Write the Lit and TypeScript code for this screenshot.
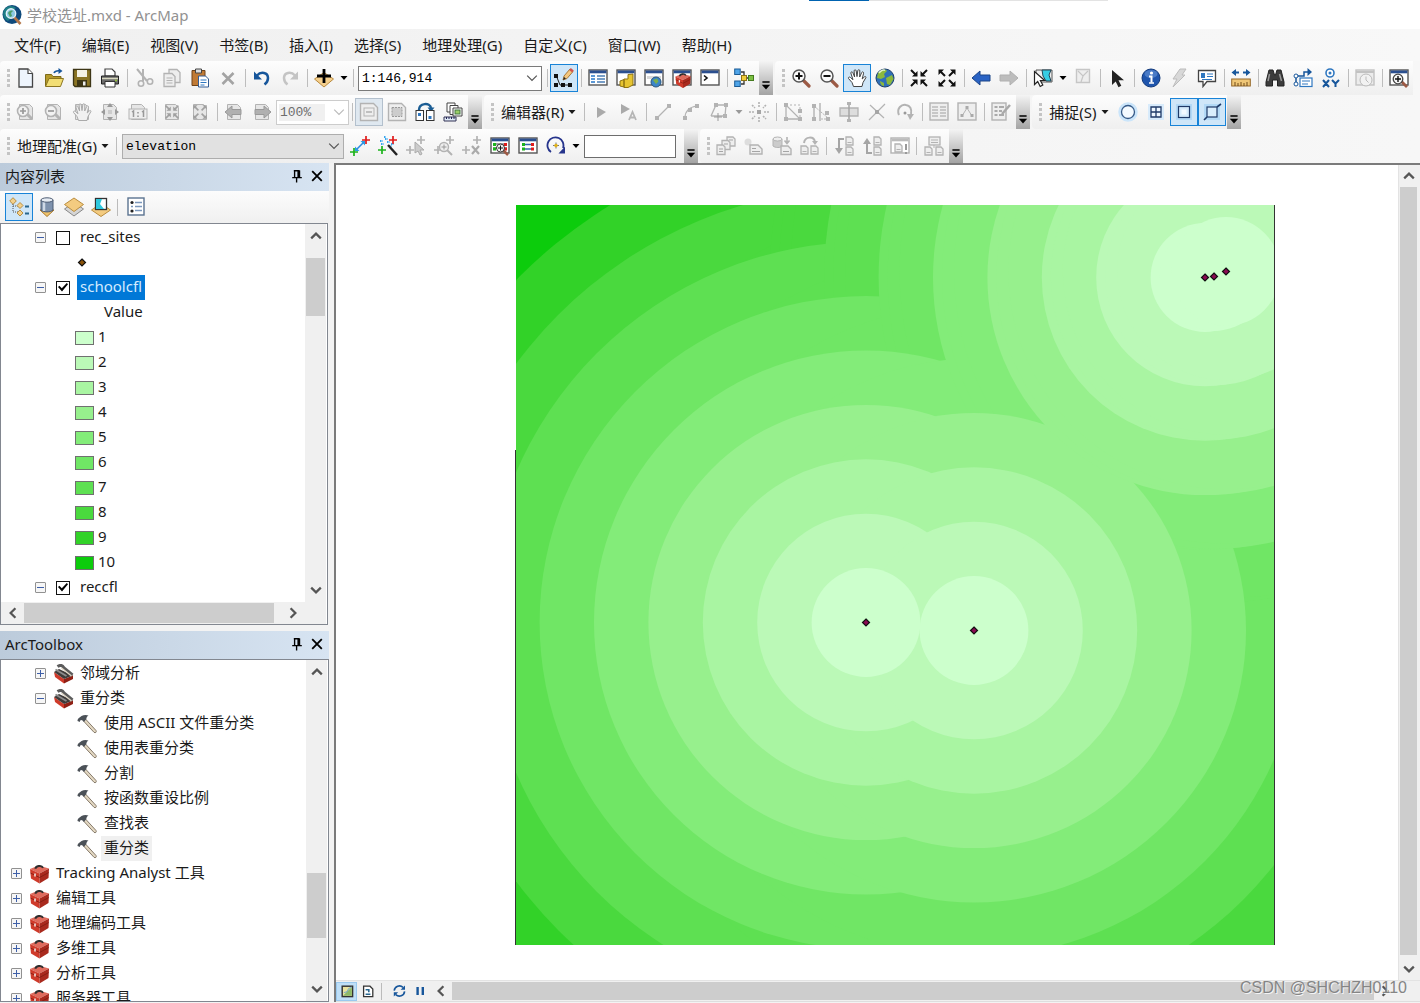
import { LitElement, html, svg, css, nothing, TemplateResult } from "lit";
import { customElement, property, state } from "lit/decorators.js";
import { classMap } from "lit/directives/class-map.js";
import { styleMap } from "lit/directives/style-map.js";

const G = "#b3b3b3";
const NAVY = "#1f3a68";
const BLUE = "#17569b";

const grayPage = svg`<path d="M3.500 2.500h10l3 3v12h-13z" fill="#e6e6e6" stroke="${G}"/>`;
const windowFrame = (body: unknown, bar = "#2b4f8f", line = "#555") => svg`
  <rect x="1" y="2" width="18" height="15" fill="#fff" stroke="${line}" stroke-width="1.400"/>
  <rect x="1.600" y="2.500" width="16.800" height="2.800" fill="${bar}"/>${body}`;
const plus = (x: number, y: number, c: string) =>
  svg`<path d="M${x - 4} ${y}h8M${x} ${y - 4}v8" stroke="${c}" stroke-width="1.700"/>`;
const smallPage = (x: number, y: number, c = G) => svg`
  <path d="M${x} ${y}h5l2 2v6h-7z" fill="#eee" stroke="${c}" stroke-width="1.300"/>
  <path d="M${x + 1.5} ${y + 5.500}h4" stroke="${c}"/>`;
const magnifier = (sign: string) => svg`
  <path d="M12.500 12.500l5.500 5.500" stroke="#9c5a45" stroke-width="3.200" stroke-linecap="round"/>
  <circle cx="8" cy="8" r="6" fill="#fafafa" stroke="#555" stroke-width="1.500"/>
  <path d="${sign}" stroke="#111" stroke-width="2"/>`;
const hand = (fill: string, line: string) => svg`
  <path d="M6.500 18.500l-1.500-4-3.500-4c-.6-1.300 1-2 2-1l2.500 2.200L3.800 5c0-1.400 1.700-1.600 2.100-.3L7.600 9 7.100 2.900c.1-1.500 1.800-1.500 2.100 0L10 8.600l.8-6c.3-1.300 2-1.200 2 .2L12.700 9l2-4.500c.7-1.200 2.100-.6 1.900.7L15.200 11l2.300-2.200c1-.7 1.800.1 1.300 1L16 14.500l-1 4z" fill="${fill}" stroke="${line}" stroke-width="1" stroke-linejoin="round"/>`;
const squeezeArrows = (c: string) => svg`
  <path d="M2 2l5 5M18 2l-5 5M2 18l5-5M18 18l-5-5" stroke="${c}" stroke-width="2"/>
  <path d="M8.500 3v5.500H3zM11.500 3v5.500H17zM8.500 17v-5.500H3zM11.500 17v-5.500H17z" fill="${c}"/>`;
const spreadArrows = (c: string) => svg`
  <path d="M3 3l5 5M17 3l-5 5M3 17l5-5M17 17l-5-5" stroke="${c}" stroke-width="2"/>
  <path d="M1.500 1.500H7L1.500 7zM18.500 1.500H13L18.500 7zM1.500 18.500H7L1.500 13zM18.500 18.500H13l5.500-5.500z" fill="${c}"/>`;
const toolbox = svg`
  <path d="M.5 5L9 1.500l10.500 3L10 9.500z" fill="#df6a5c"/>
  <path d="M.5 5L10 9.500V19.500L1.500 14.500z" fill="#cf3a2a"/>
  <path d="M19.500 4.500L10 9.500v10l9-5.500z" fill="#a92a1e"/>
  <path d="M1 9l9 4.500 9.300-5" stroke="#7c1a10" fill="none" stroke-width=".8"/>
  <path d="M6 4.800C6 2 12 .5 13.500 3.800" stroke="#2e2e2e" stroke-width="2" fill="none"/>
  <path d="M5.500 9.500v3" stroke="#f4e6e2" stroke-width="1.600"/>`;
const diamond = (x: number, y: number, r: number, fill: string, line: string) =>
  svg`<path d="M${x} ${y - r}l${r} ${r}-${r} ${r}-${r}-${r}z" fill="${fill}" stroke="${line}"/>`;

const ICONS: Record<string, unknown> = {
  newDoc: svg`<path d="M3 1h9l4.500 4.500V19H3z" fill="#eef5fd" stroke="#444" stroke-width="1.300"/><path d="M12 1v4.500h4.500" fill="#fff" stroke="#444" stroke-width="1.200"/>`,
  open: svg`<path d="M1.500 18V6.500h6l1.500 2h8V11" fill="#b59a2b" stroke="#7d6a18"/><path d="M1.500 18.500L5 10.500h14.500L16.500 18.500z" fill="#f2de74" stroke="#8b7520"/><path d="M10 5c1-2.500 3-2.500 6-2.200" stroke="${BLUE}" stroke-width="1.600" fill="none"/><path d="M14.500 0l4 3-4 3z" fill="${BLUE}"/>`,
  save: svg`<path d="M1.500 1.500h17v17H3l-1.500-1.500z" fill="#8a7424" stroke="#3d3616" stroke-width="1.300"/><rect x="5" y="2" width="10" height="7" fill="#f5f2e4"/><rect x="5" y="12" width="10" height="6.500" fill="#3d3616"/><rect x="11" y="13.500" width="2.500" height="4" fill="#eee"/>`,
  print: svg`<path d="M5 8V1h7l3 3v4z" fill="#fff" stroke="#444" stroke-width="1.200"/><path d="M1.500 8h17v8h-17z" fill="#6b6b6b" stroke="#222"/><path d="M2 10.500h16" stroke="#d8d8c0" stroke-width="1.500"/><path d="M5 13.500h10v5.500H5z" fill="#fff" stroke="#333"/><circle cx="16" cy="12.500" r="1" fill="#9c3"/>`,
  cut: svg`<path d="M3 1l10 12M9 1l0 12" stroke="${G}" stroke-width="2"/><circle cx="7" cy="15.500" r="2.700" fill="none" stroke="${G}" stroke-width="1.600"/><circle cx="16" cy="13.500" r="2.700" fill="none" stroke="${G}" stroke-width="1.600"/>`,
  copy: svg`<path d="M7 1.500h8l3 3v10H7z" fill="#eee" stroke="${G}" stroke-width="1.300"/><path d="M2 5.500h8l3 3v10H2z" fill="#eee" stroke="${G}" stroke-width="1.300"/><path d="M4.500 10h6M4.500 12.500h6M4.500 15h6" stroke="${G}"/>`,
  paste: svg`<path d="M2 2.500h13v15H2z" fill="#c07a35" stroke="#6e431a"/><path d="M5.500 1h6v4h-6z" fill="#ddd" stroke="#444"/><path d="M8.500 8h7l3 3v8h-10z" fill="#fff" stroke="#345d94"/><path d="M10.500 12h6M10.500 14.500h6M10.500 17h4" stroke="#2f77c0"/>`,
  del: svg`<path d="M4.500 5l11 11M15.500 5l-11 11" stroke="#a3a3a3" stroke-width="2.600"/>`,
  undo: svg`<path d="M5 7.500C9 3 16 4.500 16 10c0 3-1.500 5-3.500 6.500" fill="none" stroke="${BLUE}" stroke-width="2.500"/><path d="M2 3.500v8h8z" fill="${BLUE}"/>`,
  redo: svg`<path d="M15 7.500C11 3 4 4.500 4 10c0 3 1.500 5 3.500 6.500" fill="none" stroke="#c4c4c4" stroke-width="2.500"/><path d="M18 3.500v8h-8z" fill="#c4c4c4"/>`,
  addData: svg`<path d="M10 4.500l9.500 6.500-9.500 8-9.500-8z" fill="#f5cf8c" stroke="#b88a3f"/><path d="M10 1v14M3 8h14" stroke="#000" stroke-width="2.800"/>`,
  editorToggle: svg`<path d="M2 7l4 10h11" stroke="#222" fill="none"/><path d="M0 6h4v4H0zM0 15h4v4H0zM7 15h4v4H7zM14 15h4v4h-4z" fill="#111"/><path d="M9 12l1-4 6-7 3 2.500-6 7z" fill="#f4c77e" stroke="#a8793a"/><path d="M16 1l3 2.500" stroke="#d3544c" stroke-width="2.500"/><path d="M9 12l1-3 2 1.500z" fill="#222"/>`,
  tableWin: windowFrame(svg`<path d="M3 8h4M3 11h4M3 14h4" stroke="#2677c9" stroke-width="1.500"/><path d="M9 8h8M9 11h8M9 14h8" stroke="#4a7eb5" stroke-width="1.500"/>`),
  catalogWin: windowFrame(svg`<path d="M4 13l4-1.500V19l-4-1zM8 11h4V6.500l5-.5v11l-5 2.500H8z" fill="#e7c531" stroke="#8d7313"/>`),
  searchWin: windowFrame(svg`<path d="M3 8h14v3H3z" fill="#d8d8d8"/><circle cx="12" cy="14" r="5" fill="#3b86c8" stroke="#27547d"/><path d="M9 12l4-1.500 1.500 3L12 16z" fill="#7db04c"/>`),
  toolboxWin: windowFrame(svg`<g transform="translate(3 4.500) scale(.8)">${toolbox}</g>`),
  pythonWin: windowFrame(svg`<path d="M4 7.500l3 2.500-3 2.500" stroke="#111" stroke-width="1.600" fill="none"/>`),
  model: svg`<path d="M7 4h3v12H7M10 10h6" stroke="#333" fill="none" stroke-width="1.300"/><rect x=".7" y="1" width="5.500" height="5.500" fill="#4fa4e8" stroke="#1a5b95"/><rect x=".7" y="13" width="5.500" height="5.500" fill="#4fa4e8" stroke="#1a5b95"/><rect x="7.500" y="7.500" width="5" height="5" fill="#f2cc3a" stroke="#8d7313"/><rect x="14.500" y="7.500" width="5" height="5" fill="#7bc043" stroke="#447a1e"/>`,
  zoomIn: magnifier("M4.500 8h7M8 4.500v7"),
  zoomOut: magnifier("M4.500 8h7"),
  hand: hand("#fff", "#444"),
  globe: svg`<circle cx="10" cy="10" r="9" fill="#2f6fb8" stroke="#1d3f6b"/><path d="M3 5c3-4 8-4 9-2l-3 3 1 3-4 2-4-1zM11 10l6-3 1.500 4-3.500 6-3-1zM5 13l4 2 0 3c-2 0-4-2-4-5z" fill="#8cb83c"/><path d="M4 5c2-3 5-3.500 6-2.500" stroke="#e5f1c9" stroke-width="1.500" fill="none"/>`,
  fixIn: squeezeArrows("#111"),
  fixOut: spreadArrows("#111"),
  back: svg`<path d="M1 10l8-7v4h10v6H9v4z" fill="#2a63c4" stroke="#1b4487"/>`,
  forward: svg`<path d="M19 10l-8-7v4H1v6h10v4z" fill="#bdbdbd" stroke="#b0b0b0"/>`,
  selectFeat: svg`<path d="M3 2h16v12H3z" fill="#eee" stroke="#555"/><path d="M9 2h9l-2 5 2 6h-5l-3-5z" fill="#35cde3" stroke="#245"/><path d="M1.500 3.500v13l3.200-3 2.500 5 2.600-1.500-2.400-4.500h4.300z" fill="#fff" stroke="#222" stroke-width="1.200"/>`,
  clearSel: svg`<path d="M3.500 1.500h13v13h-13z" fill="#eee" stroke="#c6c6c6" stroke-width="1.400"/><path d="M5 3l5 5 5-5M10 8l-2 6" fill="none" stroke="#c6c6c6" stroke-width="1.200"/>`,
  pointer: svg`<path d="M5 2v15l3.700-3.500 2.800 5.700 2.800-1.500-2.800-5.500H17z" fill="#222"/>`,
  info: svg`<circle cx="10" cy="10" r="9" fill="#1f55ad" stroke="#123a7c"/><ellipse cx="10" cy="6" rx="6.500" ry="4" fill="#4a7bc6"/><circle cx="10.500" cy="5" r="1.600" fill="#fff"/><path d="M8 8.500h2.500v6" stroke="#fff" stroke-width="2" fill="none"/><path d="M8 15h5" stroke="#fff" stroke-width="1.500"/>`,
  bolt: svg`<path d="M11 1h6l-4 6h3L4 19l4-8H4z" fill="#d8d8d8" stroke="#bcbcbc"/>`,
  callout: svg`<path d="M1.500 2.500h17v11H10l-4 5v-5H1.500z" fill="#fff" stroke="#444" stroke-width="1.300"/><rect x="4" y="5" width="4" height="5" fill="#2f77c0"/><path d="M10 6h6M10 8.500h6M5 11.500h10" stroke="#2f77c0" stroke-width="1.200"/>`,
  measure: svg`<path d="M3 4.500h5M12 4.500h5" stroke="${BLUE}" stroke-width="2"/><path d="M5 1v7L.5 4.500zM15 1v7l4.500-3.500z" fill="${BLUE}"/><rect x=".7" y="11" width="18.600" height="7" fill="#efc676" stroke="#94682a"/><path d="M4 14v4M7 15v3M10 14v4M13 15v3M16 14v4" stroke="#6e4b1b"/>`,
  binoculars: svg`<path d="M4 2h4l1.500 5h1L12 2h4l3 12v4h-6.500v-6h-5v6H1v-4z" fill="#3c3c3c" stroke="#222"/><path d="M4.500 6L3 13M14.500 6l2 7" stroke="#999" stroke-width="1.500"/>`,
  route: svg`<path d="M3 14V8h8V4h5" fill="none" stroke="${BLUE}" stroke-width="1.500"/><path d="M14.500 0l4.500 4-4.500 4z" fill="${BLUE}"/><circle cx="3" cy="16" r="2" fill="#fff" stroke="${BLUE}"/><circle cx="3" cy="8" r="2" fill="#fff" stroke="${BLUE}"/><rect x="7" y="10" width="12" height="8.500" fill="#fff" stroke="#2f77c0" stroke-width="1.200"/><path d="M9 13h8M9 16h6" stroke="#2f77c0"/>`,
  goXY: svg`<circle cx="9" cy="5" r="4" fill="#fff" stroke="#2f77c0" stroke-width="1.600"/><circle cx="9" cy="5" r="1.500" fill="#2f77c0"/><path d="M2 12l6 7M8 12l-6 7M11 12l3.500 3.500L18 12M14.500 15v4" stroke="${BLUE}" stroke-width="2" fill="none"/>`,
  timeWin: svg`<rect x="1" y="2" width="18" height="15" fill="#ececec" stroke="#c2c2c2" stroke-width="1.400"/><path d="M1 4h18" stroke="#c2c2c2" stroke-width="2"/><circle cx="11" cy="12" r="6" fill="#f2f2f2" stroke="#bbb"/><path d="M11 8.500V12l2.500 2.500" stroke="#bbb" fill="none"/>`,
  viewerWin: windowFrame(svg`<path d="M12 13l6 6" stroke="#9c5a45" stroke-width="2.800"/><circle cx="9" cy="11" r="4.800" fill="#f5f5f5" stroke="#444" stroke-width="1.300"/><path d="M6 11h6M9 8v6" stroke="#111" stroke-width="1.400"/>`),
  pgZoomIn: svg`${grayPage}<path d="M11 12l5 5" stroke="${G}" stroke-width="3"/><circle cx="7" cy="9" r="5.500" fill="#f2f2f2" stroke="${G}" stroke-width="1.600"/><path d="M4 9h6M7 6v6" stroke="#999" stroke-width="1.700"/>`,
  pgZoomOut: svg`${grayPage}<path d="M11 12l5 5" stroke="${G}" stroke-width="3"/><circle cx="7" cy="9" r="5.500" fill="#f2f2f2" stroke="${G}" stroke-width="1.600"/><path d="M4 9h6" stroke="#999" stroke-width="1.700"/>`,
  pgHand: svg`${grayPage}${hand("#f0f0f0", "#aaa")}`,
  pgFull: svg`${grayPage}<path d="M10 1l3 4H7zM10 19l3-4H7zM1 10l4-3v6zM19 10l-4-3v6z" fill="#999"/><rect x="8" y="8" width="4" height="4" fill="#ccc"/>`,
  pgOne: svg`${grayPage}<rect x="1" y="7" width="18" height="10" fill="#eee" stroke="${G}"/><path d="M4 10l1.500-1v6M14 10l1.500-1v6" stroke="#999" stroke-width="1.500" fill="none"/><path d="M10 10v1.500M10 13.500V15" stroke="#999" stroke-width="1.600"/>`,
  pgFixIn: svg`${grayPage}<g transform="translate(2 2) scale(.8)">${squeezeArrows("#a0a0a0")}</g>`,
  pgFixOut: svg`${grayPage}<g transform="translate(2 2) scale(.8)">${spreadArrows("#a0a0a0")}</g>`,
  pgBack: svg`${grayPage}<path d="M1 10l7-6v3.500h9v5H8V16z" fill="#b0b0b0" stroke="#999"/>`,
  pgNext: svg`${grayPage}<path d="M19 10l-7-6v3.500H3v5h9V16z" fill="#b0b0b0" stroke="#999"/>`,
  draft: svg`<path d="M1.500 1.500h13l4 4v13h-17z" fill="#eee" stroke="${G}" stroke-width="1.400"/><rect x="5" y="6" width="10" height="8" fill="none" stroke="${G}"/><path d="M7 10h6" stroke="${G}" stroke-width="1.600"/>`,
  focus: svg`<path d="M1.500 1.500h13l4 4v13h-17z" fill="#eee" stroke="${G}" stroke-width="1.400"/><rect x="5" y="5.500" width="10" height="9" fill="#ccc" stroke="#999" stroke-dasharray="2 1"/>`,
  changeLayout: svg`<path d="M4 8C4 1 15 0 16 6" stroke="#1b5d94" stroke-width="2.500" fill="none"/><path d="M12.500 5.500h7L16 10z" fill="#1b5d94"/><rect x="1" y="8.500" width="7.500" height="10" fill="#fff" stroke="#333"/><rect x="11.500" y="8.500" width="7.500" height="10" fill="#fff" stroke="#333"/><path d="M3 11h3v3H3zM13.500 14h3v3h-3z" fill="#2f77c0"/>`,
  ddp: svg`<path d="M4 1h8v9H4z" fill="#fff" stroke="#444"/><path d="M7 3.500h8v9H7z" fill="#fff" stroke="#444"/><path d="M10 6h9v8h-9z" fill="#fff" stroke="#444"/><rect x="12" y="8" width="5" height="4" fill="#9c6" stroke="#474"/><path d="M1 15h12v4H1z" fill="#dfeaf6" stroke="#335"/><path d="M3.500 15v2M6 15v2M8.500 15v2M11 15v2" stroke="#225"/>`,
  edArrow: svg`<path d="M6 5l9 5-9 6z" fill="#aaa"/>`,
  edArrowA: svg`<path d="M2 2l9 5-9 5z" fill="#aaa"/><path d="M10 18l3.500-8 3.500 8M11 15.500h5" stroke="#b5b5b5" stroke-width="1.800" fill="none"/>`,
  segLine: svg`<path d="M4 16L16 4" stroke="${G}" stroke-width="1.200"/><path d="M2 14h4v4H2zM14 2h4v4h-4z" fill="${G}"/>`,
  segArc: svg`<path d="M4 16C4 9 9 5 16 4" stroke="${G}" stroke-width="1.200" fill="none"/><path d="M2 14h4v4H2zM7 6h4v4H7zM14 2h4v4h-4z" fill="${G}"/>`,
  trace: svg`<path d="M2 14L7 3h10l-1 11H2" fill="none" stroke="${G}" stroke-width="1.300"/><path d="M5 1h4v4H5zM15 1h4v4h-4zM14 12h4v4h-4z" fill="${G}"/><path d="M9 11v8M5 15h8" stroke="#999"/>`,
  pointEd: svg`<path d="M8 8h4v4H8z" fill="#a5a5a5"/><path d="M10 0v5M10 15v5M0 10h5M15 10h5M3 3l3 3M14 14l3 3M17 3l-3 3M3 17l3-3" stroke="${G}" stroke-width="1.600" stroke-dasharray="2 1"/>`,
  editVert: svg`<path d="M3 17V3l14 14z" fill="none" stroke="${G}" stroke-width="1.300"/><path d="M3 3h14v14" stroke="${G}" fill="none" stroke-dasharray="2 2"/><path d="M1 1h4v4H1zM1 15h4v4H1zM15 15h4v4h-4zM15 7h4v4h-4z" fill="${G}"/>`,
  reshape: svg`<path d="M3 3v14M9 1v18" stroke="${G}" stroke-width="1.400"/><path d="M3 4l14 12M10 17h8" stroke="${G}" stroke-dasharray="2 1"/><path d="M1 2h4v4H1zM1 15h4v4H1zM14 9h4v4h-4zM15 15h4v4h-4z" fill="${G}"/>`,
  cutPoly: svg`<path d="M1 6h18v8H1z" fill="#ddd" stroke="${G}" stroke-width="1.300"/><path d="M10 1v18" stroke="#a5a5a5" stroke-width="1.500"/><path d="M8 0h4v3H8zM8 17h4v3H8z" fill="${G}"/>`,
  splitTool: svg`<path d="M2 18L18 2M3 3l14 13" stroke="${G}" stroke-width="1.200"/><path d="M8 8h4v4H8z" fill="#a5a5a5"/>`,
  rotate: svg`<path d="M4 13C1 6 7 2 11 3c4 .5 6 4 5 9" fill="none" stroke="${G}" stroke-width="2"/><path d="M12 12h7l-4 6z" fill="${G}"/><circle cx="10" cy="11" r="1.500" fill="#999"/>`,
  attrib: svg`<rect x="1" y="1" width="18" height="17" fill="#eee" stroke="${G}" stroke-width="1.400"/><path d="M3 5h6M3 8h6M3 11h6M3 14h6M11 5h6M11 8h6M11 11h6M11 14h6" stroke="#bbb" stroke-width="1.300"/>`,
  sketchProps: svg`<rect x="1" y="1" width="18" height="17" fill="#eee" stroke="${G}" stroke-width="1.400"/><path d="M5 14l5-8 5 8" fill="none" stroke="${G}"/><path d="M3.500 12h3v3h-3zM8.500 4h3v3h-3zM13.500 12h3v3h-3z" fill="#aaa"/>`,
  createFeat: svg`<rect x="1" y="1" width="14" height="17" fill="#eee" stroke="${G}" stroke-width="1.400"/><path d="M3.500 5h3M3.500 9h3M3.500 13h3M8 5h5M8 9h3M8 13h5" stroke="#aaa" stroke-width="1.800"/><path d="M11 12l8-9" stroke="#a9a9a9" stroke-width="2.500"/>`,
  snapPoint: svg`<circle cx="10" cy="10" r="8" fill="none" stroke="#cbe5fa" stroke-width="3.500"/><circle cx="10" cy="10" r="6.500" fill="#f4faff" stroke="#365a88" stroke-width="1.300"/>`,
  snapEnd: svg`<rect x="2" y="2" width="16" height="16" fill="#d8ebfb"/><path d="M5 5h10v10H5zM10 5v10M5 10h10" stroke="${NAVY}" stroke-width="1.300" fill="#eef7ff"/>`,
  snapVertex: svg`<rect x="2" y="2" width="16" height="16" fill="#b3d9f6"/><rect x="4.500" y="4.500" width="11" height="11" fill="#d6ebfb" stroke="${NAVY}" stroke-width="1.200"/><rect x="7.500" y="7.500" width="5" height="5" fill="#f2f9ff"/>`,
  snapEdge: svg`<rect x="2" y="2" width="16" height="16" fill="#b3d9f6"/><path d="M2 18l3-3M15 5l4-3" stroke="${NAVY}" stroke-width="1.600"/><rect x="5" y="5" width="10" height="10" fill="#d9edfc" stroke="${NAVY}" stroke-width="1.200"/>`,
  ctrlPts: svg`<path d="M6 14l8-8" stroke="#2c8be0" stroke-width="1.600"/><path d="M5 10.500v4.500h4.500zM15 9.500V5h-4.500z" fill="#2c9be5"/>${plus(4, 16, "#1db31d")}${plus(16, 4, "#e01b1b")}`,
  autoReg: svg`<path d="M2 5h3M7 3h3M3 8h3M9 6h3M13 8h3M6 1h2M11 10h3" stroke="#35a5ef" stroke-width="2" stroke-dasharray="1.500 1"/>${plus(15, 4, "#e01b1b")}${plus(4, 14, "#1db31d")}<path d="M10 9l9 10" stroke="#222" stroke-width="2.400"/>`,
  geoSelect: svg`${plus(15, 4, G)}${plus(4, 14, G)}<path d="M9 6v11l3-2 2 4 2-1-2-4h4z" fill="#ccc" stroke="#aaa"/>`,
  geoZoom: svg`${plus(16, 4, G)}${plus(4, 14, G)}<path d="M13 14l5 5" stroke="${G}" stroke-width="2"/><circle cx="10" cy="11" r="4.500" fill="#eee" stroke="${G}" stroke-width="1.400"/><path d="M7.500 11h5M10 8.500v5" stroke="#999"/>`,
  geoDel: svg`${plus(15, 4, G)}${plus(4, 14, G)}<path d="M10 10l7 8M17 10l-7 8" stroke="#aaa" stroke-width="2.200"/>`,
  viewLink: windowFrame(svg`<path d="M3 8h14M3 12h14" stroke="#444"/><path d="M3 7h3v3H3zM3 11.500h3v3H3z" fill="#1db31d"/><path d="M14 7h3v3h-3zM14 11.500h3v3h-3z" fill="#e01b1b"/><path d="M13 14l5 5" stroke="#9c5a45" stroke-width="2.500"/><circle cx="10.500" cy="12" r="4" fill="#f3f3f3" stroke="#333"/><path d="M8 12h5M10.500 9.500v5" stroke="#111"/>`),
  linkTable: windowFrame(svg`<path d="M4 8.500h12M4 13h12" stroke="#36a" stroke-width="1.300"/><path d="M4 7h3v3H4zM4 11.500h3v3H4z" fill="#1db31d"/><path d="M13 7h3v3h-3zM13 11.500h3v3h-3z" fill="#e01b1b"/>`),
  rotateMap: svg`<path d="M5 16A8 8 0 1 1 17 12" fill="none" stroke="#26348c" stroke-width="1.800"/><path d="M12.500 17.500h6.500v-7z" fill="#26348c"/><path d="M10 6.500v6M7 9.500h6" stroke="#777"/><circle cx="10" cy="9.500" r="1.700" fill="#e3b316"/>`,
  pages3: svg`<g stroke="${G}" stroke-width="1.300" fill="#eee"><path d="M11 1h6l2 2v7h-8z"/><path d="M6 4.500h6l2 2v7H6z"/><path d="M1 9h6l2 2v7.500H1z"/></g><path d="M3 13h4M3 15.500h4M8 8h4M13 4h4" stroke="#a5a5a5"/>`,
  pageNew: svg`<circle cx="4" cy="6" r="3.500" fill="#ddd"/><path d="M6 9h8l4 4v5H6z" fill="#eee" stroke="${G}" stroke-width="1.400"/><path d="M8 15.500h8M8 12.500h4" stroke="#a5a5a5"/>`,
  dbPages: svg`<path d="M1 3v7c2 2 8 2 9 0V3z" fill="#ccc" stroke="${G}"/><ellipse cx="5.500" cy="3" rx="4.500" ry="2" fill="#eee" stroke="${G}"/><path d="M9 10h7l3 3v5.500H9z" fill="#eee" stroke="${G}" stroke-width="1.400"/><path d="M11 15.500h6" stroke="#a5a5a5"/><path d="M15 1v5M12.500 4.500l2.500 3 2.500-3" stroke="${G}" stroke-width="1.600" fill="none"/>`,
  swapPages: svg`<path d="M4 7C5 0 14 0 15 6" fill="none" stroke="${G}" stroke-width="2"/><path d="M12 5h6l-3 4z" fill="${G}"/>${smallPage(1, 10)}${smallPage(11, 10)}`,
  pagesDown: svg`<path d="M10 3H5v12" fill="none" stroke="#a5a5a5" stroke-width="2"/><path d="M1 12h8l-4 6z" fill="#a5a5a5"/>${smallPage(12, 1)}${smallPage(12, 11)}`,
  pagesUp: svg`<path d="M10 17H5V5" fill="none" stroke="#a5a5a5" stroke-width="2"/><path d="M1 8h8L5 2z" fill="#a5a5a5"/>${smallPage(12, 1)}${smallPage(12, 11)}`,
  pageWarn: windowFrame(svg`${smallPage(5, 8)}<path d="M16 8v6M16 16v2" stroke="#999" stroke-width="2"/>`, "#bbb", G),
  pageTree: svg`<rect x="5" y="1" width="11" height="8" fill="#eee" stroke="${G}" stroke-width="1.300"/><path d="M7 4h7M7 6.500h7M10 9v3" stroke="${G}"/>${smallPage(1, 11)}${smallPage(12, 11)}`,
  listDraw: svg`${diamond(4, 4, 3.300, "#f3d08a", "#b98d3f")}<path d="M4 7v8h5M4 9h5" stroke="#555" stroke-dasharray="1 1" fill="none"/>${diamond(11, 8.500, 3, "#f3d08a", "#b98d3f")}${diamond(11, 16, 3, "#f3d08a", "#b98d3f")}<path d="M16 9.500h4M16 16.500h4" stroke="#27668f" stroke-width="1.800"/>`,
  listSource: svg`<path d="M3 13l7 6.500 7-6.500z" fill="#f0c36b" stroke="#a9792d"/><path d="M4 3v10c2 2.500 10 2.500 12 0V3z" fill="#7e92ad" stroke="#4d5c73"/><path d="M7 5v9" stroke="#cfd9e6" stroke-width="2.500"/><ellipse cx="10" cy="3" rx="6" ry="2.200" fill="#e6ecf3" stroke="#4d5c73"/>`,
  listVis: svg`<path d="M.5 12L10 5.500l9.500 6.500L10 19z" fill="#d5d5d5" stroke="#888"/><path d="M.5 7.500L10 1l9.500 6.500L10 14.500z" fill="#f3cb80" stroke="#b98d3f"/>`,
  listSel: svg`<path d="M.5 13L10 6.500l9.500 6.500L10 19.500z" fill="#f3cb80" stroke="#b98d3f"/><rect x="4.500" y="1.500" width="11" height="11" fill="#fff" stroke="#333" stroke-width="1.300"/><path d="M5 2h6l-2 5 4 5H5z" fill="#2fc7dc"/>`,
  options: svg`<rect x="2" y="1" width="16" height="17" fill="#fff" stroke="#5b7390" stroke-width="1.400"/><circle cx="6" cy="5.500" r="1.600" fill="#222"/><circle cx="6" cy="14" r="1.600" fill="#222"/><path d="M9 5.500h7M9 9.500h7M9 13.500h7M5 9.500h2" stroke="#7b98bd" stroke-width="1.400"/>`,
  toolbox,
  toolset: svg`<path d="M.5 8l10 7v4.500L1.500 13z" fill="#cf3a2a"/><path d="M10.500 15l9-3.500V15l-9 4.500z" fill="#8f2015"/><path d="M.5 8l5-3 14 6.500-9 3.500z" fill="#3e3a38"/><path d="M4 2.500c3-2 5-1 6.500 1.500L19 11" stroke="#5c5c5c" stroke-width="3" fill="none"/><path d="M2 5.500l11 6.500" stroke="#8b8b8b" stroke-width="2"/><path d="M8 4l10 8" stroke="#ddd3c2" stroke-width="1.500"/>`,
  hammer: svg`<path d="M8 5l10.500 11.500c1 1.500-.7 3-2 1.800L6 7z" fill="#e3d8c2" stroke="#85796a"/><path d="M0 7c0-3 2.500-3.500 4-5 2-1 4.500-1.500 7-.5-1 .8-2 1.500-2.200 3.500L6.500 8 5 6.500C3.500 5 2 6.500 2.500 8z" fill="#4b5157"/>`,
  dataView: svg`<rect x="4" y="4" width="13" height="13" fill="#e9e3a0" stroke="#333" stroke-width="1.800"/><path d="M5 16L16 5v11z" fill="#8db968"/><path d="M6 12l4-1 2-4 4-2" stroke="#5b9bd0" fill="none"/>`,
  layoutView: svg`<path d="M4.500 4h8l3.500 3.500V17H4.500z" fill="#fff" stroke="#333" stroke-width="1.600"/><path d="M7 8.500h4v3M7 14h6" stroke="#27668f" stroke-width="2" fill="none"/>`,
  refresh: svg`<path d="M4 9.500a6.500 6.500 0 0 1 11-4M17 10.500a6.500 6.500 0 0 1-11 4" fill="none" stroke="${BLUE}" stroke-width="2"/><path d="M17.500 3v5.500H12zM3.500 17v-5.500H9z" fill="${BLUE}"/>`,
  pause: svg`<path d="M7 5v10M13.500 5v10" stroke="${BLUE}" stroke-width="3"/>`,
  pin: svg`<path d="M6 3.500h7M7 3.500v8M4 12h12M9.500 12v6" stroke="#000" stroke-width="1.700" fill="none"/><path d="M10.500 3h3.500v9h-3.500z"/>`,
  close: svg`<path d="M4 4l12 12M16 4L4 16" stroke="#000" stroke-width="2.300"/>`,
  chevUp: svg`<path d="M4 13l6-6 6 6" fill="none" stroke="#555" stroke-width="2.800"/>`,
  chevDown: svg`<path d="M4 7l6 6 6-6" fill="none" stroke="#555" stroke-width="2.800"/>`,
  chevLeft: svg`<path d="M13 4l-6 6 6 6" fill="none" stroke="#555" stroke-width="2.800"/>`,
  chevRight: svg`<path d="M7 4l6 6-6 6" fill="none" stroke="#555" stroke-width="2.800"/>`,
  thinDown: svg`<path d="M2 6l8 8 8-8" fill="none" stroke="currentColor" stroke-width="2"/>`,
  caret: svg`<path d="M3 6h14l-7 8z" fill="currentColor"/>`,
  overflow: svg`<path d="M4 5h12" stroke="#000" stroke-width="2.500"/><path d="M3 9.500h14l-7 8z" fill="#000"/>`,
  app: svg`<circle cx="10" cy="9.500" r="9.500" fill="#0f4a7c"/><path d="M2 5c3-5 9-5 12-2l-4 3 1 5-5 5c-4-2-6-6-4-11z" fill="#1f7f86"/><path d="M12 12l6.500 7" stroke="#b4774a" stroke-width="2.600"/><circle cx="9" cy="8.500" r="4.700" fill="#8cc9e4" stroke="#e2f1f8" stroke-width="1.400"/><path d="M6 8c1-2 3-3 5-2l-2 2 1 3-2 1z" fill="#4fa06a"/>`,
};

const icon = (name: string, cls = "i20") =>
  html`<svg class=${cls} viewBox="0 0 20 20" aria-hidden="true">${ICONS[name]}</svg>`;

type Item =
  | { t: "b"; icon: string; label: string; on?: boolean; soft?: boolean; off?: boolean }
  | { t: "sep" }
  | { t: "drop"; off?: boolean }
  | { t: "menu"; text: string }
  | { t: "sel"; label: string; value: string; kind: string; off?: boolean }
  | { t: "in"; label: string };

const b = (icon: string, label: string, o: object = {}): Item => ({ t: "b", icon, label, ...o });
const off = (icon: string, label: string, o: object = {}): Item => b(icon, label, { off: true, ...o });
const sep: Item = { t: "sep" };
const drop: Item = { t: "drop" };

const ROWS: { name: string; more: boolean; items: Item[] }[][] = [
  [
    {
      name: "标准工具", more: true, items: [
        b("newDoc", "新建"), b("open", "打开"), b("save", "保存"), b("print", "打印"), sep,
        off("cut", "剪切"), off("copy", "复制"), b("paste", "粘贴"), off("del", "删除"), sep,
        b("undo", "撤消"), off("redo", "恢复"), sep, b("addData", "添加数据"), drop, sep,
        { t: "sel", label: "地图比例", value: "1:146,914", kind: "scale" }, sep,
        b("editorToggle", "编辑器工具条", { on: true }), sep,
        b("tableWin", "内容列表"), b("catalogWin", "目录"), b("searchWin", "搜索"), b("toolboxWin", "ArcToolbox"), b("pythonWin", "Python"), sep,
        b("model", "模型构建器"),
      ],
    },
    {
      name: "工具", more: false, items: [
        b("zoomIn", "放大"), b("zoomOut", "缩小"), b("hand", "平移", { on: true }), b("globe", "全图"), sep,
        b("fixIn", "固定比例放大"), b("fixOut", "固定比例缩小"), sep, b("back", "返回"), off("forward", "前进"), sep,
        b("selectFeat", "选择要素"), drop, off("clearSel", "清除所选要素"), sep, b("pointer", "选择元素"), sep,
        b("info", "识别"), off("bolt", "超链接"), b("callout", "HTML 弹出窗口"), sep, b("measure", "测量"), sep,
        b("binoculars", "查找"), b("route", "查找路径"), b("goXY", "转到 XY"), sep, off("timeWin", "时间滑块"), sep,
        b("viewerWin", "查看器窗口"),
      ],
    },
  ],
  [
    {
      name: "布局", more: true, items: [
        off("pgZoomIn", "布局放大"), off("pgZoomOut", "布局缩小"), off("pgHand", "布局平移"), off("pgFull", "缩放整个页面"), off("pgOne", "缩放至 100%"), sep,
        off("pgFixIn", "布局固定放大"), off("pgFixOut", "布局固定缩小"), sep, off("pgBack", "上一范围"), off("pgNext", "下一范围"),
        { t: "sel", label: "布局缩放", value: "100%", kind: "percent", off: true }, sep,
        off("draft", "切换描绘模式", { soft: true }), off("focus", "焦点数据框"), b("changeLayout", "更改布局"), b("ddp", "数据驱动页面"),
      ],
    },
    {
      name: "编辑器", more: true, items: [
        { t: "menu", text: "编辑器(R)" }, sep, off("edArrow", "编辑工具"), off("edArrowA", "编辑注记"), sep,
        off("segLine", "直线段"), off("segArc", "端点弧段"), off("trace", "追踪"), { t: "drop", off: true }, off("pointEd", "点"), sep,
        off("editVert", "编辑折点"), off("reshape", "整形要素"), off("cutPoly", "裁剪面"), off("splitTool", "分割工具"), off("rotate", "旋转"), sep,
        off("attrib", "属性"), off("sketchProps", "草图属性"), sep, off("createFeat", "创建要素"),
      ],
    },
    {
      name: "捕捉", more: true, items: [
        { t: "menu", text: "捕捉(S)" }, b("snapPoint", "点捕捉"), b("snapEnd", "端点捕捉"),
        b("snapVertex", "折点捕捉", { on: true }), b("snapEdge", "边捕捉", { on: true }),
      ],
    },
  ],
  [
    {
      name: "地理配准", more: true, items: [
        { t: "menu", text: "地理配准(G)" }, sep, { t: "sel", label: "配准图层", value: "elevation", kind: "layer" },
        b("ctrlPts", "添加控制点"), b("autoReg", "自动配准"), off("geoSelect", "选择链接"), off("geoZoom", "缩放至链接"), off("geoDel", "删除链接"),
        b("viewLink", "查看器"), b("linkTable", "链接表"), b("rotateMap", "旋转"), drop, { t: "in", label: "旋转角度" },
      ],
    },
    {
      name: "版本管理", more: true, items: [
        off("pages3", "版本"), off("pageNew", "新建版本"), off("dbPages", "更改版本"), off("swapPages", "交换版本"), sep,
        off("pagesDown", "协调"), off("pagesUp", "提交"), off("pageWarn", "冲突"), sep, off("pageTree", "版本变更"),
      ],
    },
  ],
];

const MENUS = ["文件(F)", "编辑(E)", "视图(V)", "书签(B)", "插入(I)", "选择(S)", "地理处理(G)", "自定义(C)", "窗口(W)", "帮助(H)"];

const RAMP = ["#ccffcc", "#bbf9b7", "#a9f5a2", "#97f08d", "#83ec79", "#70e665", "#5ee052", "#4ad93e", "#32d228", "#0ccc0c"];

const SCHOOLS = [[866, 622], [974, 630], [1205, 277], [1214, 276], [1226, 271]];
const BAND = 54.4;

const shared = css`
  * { box-sizing: border-box; }
  button, input, select { font: inherit; color: inherit; margin: 0; padding: 0; border: 0; border-radius: 0; background: none; }
  svg { display: block; flex: none; }
  .i20 { width: 20px; height: 20px; }
  .i16 { width: 16px; height: 16px; }
  .i12 { width: 12px; height: 12px; }
  .i10 { width: 10px; height: 10px; }
`;

@customElement("tool-strip")
class ToolStrip extends LitElement {
  @property({ attribute: false }) items: Item[] = [];
  @property({ type: Boolean }) more = false;

  static styles = [shared, css`
    :host { display: flex; align-items: center; flex: none; height: 34px; padding-left: 7px; border-radius: 4px 0 0 4px; background: linear-gradient(#fdfdfd, #f6f6f6 50%, #efefef); }
    .grip { width: 3px; height: 19px; margin-right: 2px; background: repeating-linear-gradient(#c4c4c4 0 3px, transparent 3px 5px); }
    .btn { display: grid; place-items: center; width: 28px; height: 28px; border: 1px solid transparent; }
    .btn.on { background: #cfe6f8; border-color: #1883d7; }
    .btn.soft { background: #dfe8f0; border-color: #b3c0cd; }
    .sep { width: 6px; height: 18px; display: flex; justify-content: center; }
    .sep::before { content: ""; width: 1px; background: #bdbdbd; }
    .drop { display: grid; place-items: center; width: 12px; height: 28px; color: #000; }
    .drop:disabled { color: #999; }
    .menu { display: flex; align-items: center; gap: 3px; height: 28px; padding: 0 4px 0 5px; white-space: nowrap; }
    .pick { display: grid; align-items: center; margin: 0 2px; font: 13px "Liberation Mono", "Noto Sans CJK SC", monospace; color: #000; }
    .pick select, .pick .mark { grid-area: 1 / 1; }
    .pick select { appearance: none; height: 25px; padding: 0 24px 0 3px; background: #fff; border: 1px solid #7a7a7a; opacity: 1; }
    .pick .mark { justify-self: end; margin-right: 4px; color: #555; pointer-events: none; }
    .scale select { width: 184px; }
    .layer select { width: 222px; background: #e1e1e1; border-color: #adadad; }
    .percent select { width: 73px; color: #6d6d6d; border-color: #ccc; background: linear-gradient(#f0f0f0, #f0f0f0) 2px 3px / 46px 17px no-repeat #fff; }
    .percent .mark { color: #bbb; }
    .percent { margin: 0; }
    .angle { width: 92px; height: 23px; margin: 0 7px 0 2px; padding: 0 4px; background: #fff; border: 1px solid #6d6d6d; }
    .more { align-self: stretch; width: 14px; margin-left: 1px; display: flex; align-items: flex-end; justify-content: center; padding-bottom: 4px; background: linear-gradient(#f4f4f4, #cfcfcf 45%, #a4a4a4); }
  `];

  private item(i: Item): TemplateResult {
    switch (i.t) {
      case "b":
        return html`<button class=${classMap({ btn: true, on: !!i.on, soft: !!i.soft })} aria-label=${i.label} ?disabled=${!!i.off}>${icon(i.icon)}</button>`;
      case "sep":
        return html`<span class="sep"></span>`;
      case "drop":
        return html`<button class="drop" aria-label="更多" ?disabled=${!!i.off}>${icon("caret", "i10")}</button>`;
      case "menu":
        return html`<button class="menu">${i.text}${icon("caret", "i10")}</button>`;
      case "sel":
        return html`<label class="pick ${i.kind}"><select aria-label=${i.label} ?disabled=${!!i.off}><option>${i.value}</option></select>${icon("thinDown", "i12 mark")}</label>`;
      default:
        return html`<input class="angle" type="text" aria-label=${i.label}>`;
    }
  }

  render() {
    return html`<span class="grip"></span>${this.items.map((i) => this.item(i))}
      ${this.more ? html`<button class="more" aria-label="工具条选项">${icon("overflow", "i12")}</button>` : nothing}`;
  }
}

@customElement("scroll-bar")
class ScrollBar extends LitElement {
  @property() dir: "v" | "h" = "v";
  @property({ type: Number }) before = 0;
  @property({ type: Number }) thumb = 1;
  @property({ type: Number }) after = 0;

  static styles = [shared, css`
    :host { display: flex; background: #f0f0f0; }
    .bar { display: flex; flex: 1; min-width: 0; min-height: 0; }
    .v { flex-direction: column; }
    .arrow { display: grid; place-items: center; flex: none; }
    .v .arrow { height: 22px; }
    .h .arrow { width: 22px; }
    .thumb { background: #cdcdcd; }
  `];

  render() {
    const v = this.dir === "v";
    return html`<div class="bar ${this.dir}">
      <button class="arrow" aria-label=${v ? "向上滚动" : "向左滚动"}>${icon(v ? "chevUp" : "chevLeft", "i16")}</button>
      <span style=${styleMap({ flex: String(this.before) })}></span>
      <span class="thumb" style=${styleMap({ flex: String(this.thumb) })}></span>
      <span style=${styleMap({ flex: String(this.after) })}></span>
      <button class="arrow" aria-label=${v ? "向下滚动" : "向右滚动"}>${icon(v ? "chevDown" : "chevRight", "i16")}</button>
    </div>`;
  }
}

@customElement("map-canvas")
class MapCanvas extends LitElement {
  static styles = css`
    :host { display: block; background: #fff; overflow: hidden; min-width: 0; min-height: 0; }
    svg { display: block; width: 100%; height: 100%; }
  `;

  render() {
    return html`<svg viewBox="336 165 1062 815" role="img" aria-label="schoolcfl">
      <defs><clipPath id="extent"><rect x="516" y="205" width="759" height="740"/></clipPath></defs>
      <g clip-path="url(#extent)">
        <rect x="516" y="205" width="759" height="740" fill=${RAMP[9]} />
        ${[8, 7, 6, 5, 4, 3, 2, 1, 0].map((k) => svg`<g fill=${RAMP[k]}>
          ${SCHOOLS.map(([x, y]) => svg`<circle cx=${x} cy=${y + 0.5} r=${BAND * (k + 1)} />`)}</g>`)}
      </g>
      <path d="M515.500 450v495M1274.500 205v740" stroke="#333" />
      ${SCHOOLS.map(([x, y]) => svg`<path d="M${x} ${y - 3}l3.500 3.500-3.500 3.500-3.500-3.500z" fill="#8a0a52" stroke="#111" stroke-width="1.200" />`)}
    </svg>`;
  }
}

interface Tool { level: number; icon: string; text: string; open?: boolean; picked?: boolean }

const TOOLS: Tool[] = [
  { level: 1, icon: "toolset", text: "邻域分析", open: false },
  { level: 1, icon: "toolset", text: "重分类", open: true },
  { level: 2, icon: "hammer", text: "使用 ASCII 文件重分类" },
  { level: 2, icon: "hammer", text: "使用表重分类" },
  { level: 2, icon: "hammer", text: "分割" },
  { level: 2, icon: "hammer", text: "按函数重设比例" },
  { level: 2, icon: "hammer", text: "查找表" },
  { level: 2, icon: "hammer", text: "重分类", picked: true },
  { level: 0, icon: "toolbox", text: "Tracking Analyst 工具", open: false },
  { level: 0, icon: "toolbox", text: "编辑工具", open: false },
  { level: 0, icon: "toolbox", text: "地理编码工具", open: false },
  { level: 0, icon: "toolbox", text: "多维工具", open: false },
  { level: 0, icon: "toolbox", text: "分析工具", open: false },
  { level: 0, icon: "toolbox", text: "服务器工具", open: false },
];

@customElement("app-root")
class AppRoot extends LitElement {
  @state() private layers: Record<string, boolean> = { rec_sites: false, schoolcfl: true, reccfl: true };

  static styles = [shared, css`
    :host { display: flex; flex-direction: column; position: relative; height: 100vh; overflow: hidden; background: #f3f3f3; color: #1a1a1a; font: 15px/20px "Noto Sans", "Noto Sans CJK SC", sans-serif; }
    .title { display: flex; align-items: center; gap: 5px; flex: none; height: 29px; padding: 0 2px; background: #fff; color: #929292; }
    .progress { position: absolute; top: 0; left: 57%; width: 21%; height: 1px; display: flex; background: #e3e3e3; }
    .progress span { width: 20%; background: #0063b1; }
    .menus { display: flex; align-items: center; gap: 21px; flex: none; height: 32px; padding: 0 14px; background: linear-gradient(90deg, #f0f0f0, #f8f8f8); }
    .menus button { white-space: nowrap; }
    .row { display: flex; flex: none; gap: 2px; background: linear-gradient(90deg, #f1f1f1, #f7f7f7); }
    .work { display: grid; grid-template-columns: 329px minmax(0, 1fr); gap: 5px; flex: 1; min-height: 0; padding-bottom: 1px; }
    .side { display: grid; grid-template-rows: 462px minmax(0, 1fr); gap: 6px; min-height: 0; }
    .panel { display: flex; flex-direction: column; min-height: 0; }
    .head { display: flex; align-items: center; gap: 4px; flex: none; height: 28px; padding: 0 4px 2px 5px; background: linear-gradient(90deg, #bccbdb, #d7e4f2); }
    .head h2 { flex: 1; margin: 0; font-size: 15px; font-weight: 400; }
    .head button { display: grid; place-items: center; width: 16px; height: 20px; }
    .tools { display: flex; align-items: center; flex: none; height: 32px; padding-left: 5px; background: linear-gradient(#fcfcfc, #f0f0f0); }
    .tbtn { display: grid; place-items: center; width: 27px; height: 28px; }
    .tbtn.on { width: 28px; background: #cfe6f8; border: 1px solid #1883d7; }
    .sep { width: 1px; height: 17px; margin: 0 4px 0 3px; background: #bbb; }
    .tree { display: grid; grid-template-columns: minmax(0, 1fr) 21px; flex: 1; min-height: 0; padding-right: 1px; border: 1px solid #828790; background: #fff; }
    .tree.toc { grid-template-rows: minmax(0, 1fr) 22px; margin-right: 1px; }
    .tree scroll-bar { padding: 1px; }
    .corner { background: #f0f0f0; }
    .list { margin: 0; padding: 1px 0 0; list-style: none; overflow: hidden; min-height: 0; }
    .list li { display: flex; align-items: center; height: 25px; padding-bottom: 2px; line-height: 21px; white-space: nowrap; }
    .list .lv0, .list .lv1, .list .lv2 { padding-bottom: 0; }
    .lv0 { padding-left: 10px; }
    .lv1 { padding-left: 34px; }
    .lv2 { padding-left: 76px; }
    .exp { display: grid; place-items: center; width: 11px; height: 11px; margin-right: 7px; border: 1px solid #919191; border-radius: 1px; background: #f6f6f6; flex: none; }
    .exp::before, .exp::after { content: ""; grid-area: 1 / 1; background: #3e5fa8; }
    .exp::before { width: 7px; height: 1px; }
    .exp.shut::after { width: 1px; height: 7px; }
    .slot { width: 21px; padding-left: 3px; flex: none; }
    .box { appearance: none; display: grid; place-items: center; width: 14px; height: 14px; border: 1px solid #111; background: #fff; }
    .box:checked::before { content: ""; width: 10px; height: 10px; background: #000; clip-path: polygon(0 45%, 14% 32%, 38% 58%, 88% 5%, 100% 18%, 40% 90%); }
    .name { margin-left: 3px; padding: 1px 3px 3px; line-height: 21px; }
    .name.sel { background: #0078d7; color: #d5ecff; }
    .name.dim { background: #f0f0f0; }
    .i21 { width: 21px; height: 20px; }
    .mark { padding-left: 76px; }
    .value { padding-left: 103px; }
    .class { padding-left: 74px; gap: 4px; }
    .swatch { width: 19px; height: 14px; margin-top: 2px; border: 1px solid #707070; }
    .view { display: grid; grid-template-columns: minmax(0, 1fr) 22px; grid-template-rows: minmax(0, 1fr) 22px; min-height: 0; border-left: 2px solid #7b7b7b; border-top: 2px solid #7b7b7b; }
    .view > scroll-bar { padding: 0 3px 0 1px; border-left: 1px solid #e3e3e3; }
    .foot { display: flex; align-items: center; grid-column: 1 / -1; border-top: 1px solid #e3e3e3; border-bottom: 1px solid #dedede; background: #f0f0f0; }
    .foot button { display: grid; place-items: center; width: 21px; height: 19px; }
    .foot .on { background: #bfdff7; border: 1px solid #99c9ef; }
    .foot .sep { margin: 0 6px 0 3px; }
    .foot scroll-bar { flex: 1; height: 18px; margin-right: 24px; }
    .mono { position: absolute; right: 13px; bottom: 5px; color: #858585; font: 16px/20px "Liberation Sans", sans-serif; text-shadow: 1px 1px 0 #f4f4f4; pointer-events: none; }
  `];

  private layer(name: string, selected = false) {
    return html`<li class="lv1"><button class="exp" aria-label="折叠 ${name}"></button>
      <span class="slot"><input class="box" type="checkbox" id=${name} .checked=${this.layers[name]}
        @change=${(e: Event) => { this.layers = { ...this.layers, [name]: (e.target as HTMLInputElement).checked }; }}></span>
      <label class=${classMap({ name: true, sel: selected })} for=${name}>${name}</label></li>`;
  }

  private head(title: string) {
    return html`<header class="head"><h2>${title}</h2>
      <button aria-label="自动隐藏">${icon("pin", "i16")}</button>
      <button aria-label="关闭">${icon("close", "i16")}</button></header>`;
  }

  render() {
    return html`
      <header class="title">${icon("app")}<span>学校选址.mxd - ArcMap</span></header>
      <div class="progress"><span></span></div>
      <nav class="menus">${MENUS.map((m) => html`<button>${m}</button>`)}</nav>
      ${ROWS.map((r) => html`<div class="row">${r.map((s) => html`<tool-strip role="toolbar" aria-label=${s.name} .items=${s.items} ?more=${s.more}></tool-strip>`)}</div>`)}
      <main class="work">
        <aside class="side">
          <section class="panel">
            ${this.head("内容列表")}
            <div class="tools">
              <button class="tbtn on" aria-label="按绘制顺序列出">${icon("listDraw")}</button>
              <button class="tbtn" aria-label="按源列出">${icon("listSource")}</button>
              <button class="tbtn" aria-label="按可见性列出">${icon("listVis")}</button>
              <button class="tbtn" aria-label="按选择列出">${icon("listSel")}</button>
              <span class="sep"></span>
              <button class="tbtn" aria-label="选项">${icon("options")}</button>
            </div>
            <div class="tree toc">
              <ul class="list">
                ${this.layer("rec_sites")}
                <li class="mark"><svg class="i10" viewBox="0 0 10 10"><path d="M5 2l3.500 3.500L5 9 1.500 5.500z" fill="#8a5208" stroke="#111" stroke-width="1.200"/></svg></li>
                ${this.layer("schoolcfl", true)}
                <li class="value">Value</li>
                ${RAMP.map((c, i) => html`<li class="class"><span class="swatch" style=${styleMap({ background: c })}></span>${i + 1}</li>`)}
                ${this.layer("reccfl")}
              </ul>
              <scroll-bar dir="v" before="11" thumb="58" after="265"></scroll-bar>
              <scroll-bar dir="h" before="0" thumb="251" after="8"></scroll-bar>
              <span class="corner"></span>
            </div>
          </section>
          <section class="panel">
            ${this.head("ArcToolbox")}
            <div class="tree">
              <ul class="list">
                ${TOOLS.map((t) => html`<li class="lv${t.level}">
                  ${t.open === undefined ? nothing : html`<button class=${classMap({ exp: true, shut: !t.open })} aria-label="${t.open ? "折叠" : "展开"} ${t.text}"></button>`}
                  ${icon(t.icon, "i21")}<span class=${classMap({ name: true, dim: !!t.picked })}>${t.text}</span></li>`)}
              </ul>
              <scroll-bar dir="v" before="191" thumb="65" after="40"></scroll-bar>
            </div>
          </section>
        </aside>
        <section class="view">
          <map-canvas></map-canvas>
          <scroll-bar dir="v" before="0" thumb="768" after="3"></scroll-bar>
          <div class="foot">
            <button class="on" aria-label="数据视图">${icon("dataView", "i16")}</button>
            <button aria-label="布局视图">${icon("layoutView", "i16")}</button>
            <span class="sep"></span>
            <button aria-label="刷新">${icon("refresh", "i16")}</button>
            <button aria-label="暂停绘制">${icon("pause", "i16")}</button>
            <scroll-bar dir="h" before="0" thumb="1" after="0"></scroll-bar>
          </div>
        </section>
      </main>
      <div class="mono">CSDN @SHCHZH0110</div>
    `;
  }
}
